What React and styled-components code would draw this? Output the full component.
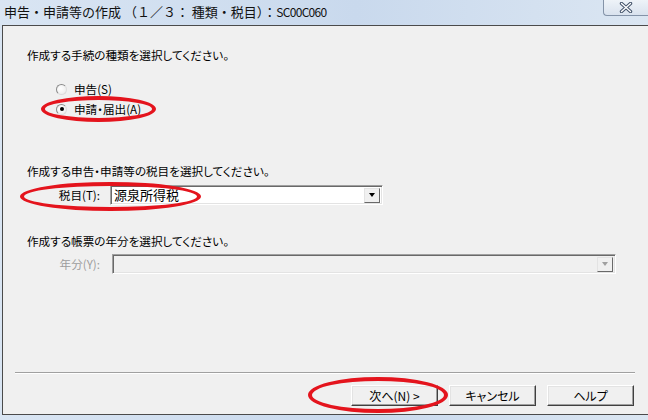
import React from "react";
import styled, { createGlobalStyle } from "styled-components";

const GlobalStyle = createGlobalStyle`
  html, body {
    margin: 0;
    padding: 0;
  }
  body {
    width: 648px;
    height: 420px;
    overflow: hidden;
    font-family: "Noto Sans CJK JP", "Noto Sans", sans-serif;
  }
`;

const Window = styled.div`
  position: relative;
  width: 648px;
  height: 420px;
  display: flex;
  flex-direction: column;
  background: linear-gradient(to right, #d9e5f3, #c9d9ed 55%, #dbe6f2);
  overflow: hidden;
`;

const TitleBar = styled.div`
  height: 25px;
  display: flex;
  align-items: flex-start;
`;

const Title = styled.div`
  font-size: 13px;
  line-height: 16px;
  color: #111;
  padding: 4px 0 0 4px;
  white-space: nowrap;
  span {
    font-size: 12px;
    letter-spacing: -0.7px;
  }
`;

const CloseButton = styled.div`
  margin-left: auto;
  width: 45px;
  height: 16px;
  box-sizing: border-box;
  border: 1px solid #8493a8;
  border-top: none;
  border-right: none;
  border-bottom-left-radius: 4px;
  background: linear-gradient(#eef3f8, #d9e2ee);
  display: flex;
  align-items: center;
  justify-content: center;
`;

const Client = styled.div`
  flex: 1;
  margin: 0 0 5px 2px;
  background: #f0f0f0;
  border: 1px solid #4b4b4b;
  border-right: none;
  display: flex;
  flex-direction: column;
  font-size: 11.6px;
  color: #000;
  font-feature-settings: "palt";
`;

const Prompt = styled.div`
  margin: ${(p) => p.$top}px 0 0 24px;
  line-height: 16px;
  white-space: nowrap;
`;

const RadioGroup = styled.div`
  margin: 16px 0 0 53px;
  display: flex;
  flex-direction: column;
`;

const RadioRow = styled.label`
  height: 20px;
  display: flex;
  align-items: center;
  gap: 7px;
  white-space: nowrap;
`;

const RadioDot = styled.span`
  width: 11px;
  height: 11px;
  box-sizing: border-box;
  border-radius: 50%;
  border: 1px solid;
  border-color: #8a8a8a #dcdcdc #dcdcdc #8a8a8a;
  background: radial-gradient(circle at 40% 40%, #ffffff, #e9e9e9);
  display: flex;
  align-items: center;
  justify-content: center;
  &::after {
    content: "";
    width: 4px;
    height: 4px;
    border-radius: 50%;
    background: ${(p) => (p.$checked ? "#000" : "transparent")};
  }
`;

const FieldRow = styled.div`
  margin-top: ${(p) => p.$top}px;
  display: flex;
  align-items: center;
  height: 20px;
`;

const FieldLabel = styled.div`
  width: 97px;
  text-align: right;
  color: ${(p) => (p.$disabled ? "#9d9d9d" : "#000")};
  white-space: nowrap;
`;

const Combo = styled.div`
  margin-left: ${(p) => p.$gap}px;
  width: ${(p) => p.$width}px;
  height: 20px;
  box-sizing: border-box;
  border: 1px solid;
  border-color: #a0a0a0 #ffffff #ffffff #a0a0a0;
  box-shadow: inset 1px 1px 0 #696969, inset -1px -1px 0 #e3e3e3;
  background: ${(p) => (p.$disabled ? "#f0f0f0" : "#fff")};
  display: flex;
  align-items: center;
  padding: 0 2px 0 3px;
`;

const ComboText = styled.div`
  flex: 1;
  font-size: 13px;
  line-height: 16px;
`;

const DropButton = styled.div`
  width: 16px;
  height: 15px;
  box-sizing: border-box;
  border: 1px solid;
  border-color: #e3e3e3 #696969 #696969 #e3e3e3;
  background: #f0f0f0;
  display: flex;
  align-items: center;
  justify-content: center;
  &::after {
    content: "";
    border-left: 3.5px solid transparent;
    border-right: 3.5px solid transparent;
    border-top: 4px solid ${(p) => (p.$disabled ? "#a0a0a0" : "#000")};
  }
`;

const Spacer = styled.div`
  flex: 1;
`;

const Separator = styled.div`
  margin: 0 13px 0 12px;
  border-top: 1px solid #a0a0a0;
  border-bottom: 1px solid #ffffff;
`;

const ButtonBar = styled.div`
  display: flex;
  justify-content: flex-end;
  gap: 11px;
  padding: 11px 14px 8px 0;
`;

const Button = styled.div`
  width: 87px;
  height: 21px;
  box-sizing: border-box;
  border: 1px solid;
  border-color: #ffffff #404040 #404040 #ffffff;
  box-shadow: inset -1px -1px 0 #a0a0a0, inset 1px 1px 0 #e3e3e3;
  background: #f0f0f0;
  display: flex;
  align-items: center;
  justify-content: center;
  white-space: nowrap;
  font-size: 12px;
`;

const Mark = styled.div`
  position: absolute;
  left: ${(p) => p.$x}px;
  top: ${(p) => p.$y}px;
  width: ${(p) => p.$w}px;
  height: ${(p) => p.$h}px;
  box-sizing: border-box;
  border: 4px solid #e4141d;
  border-radius: 50%;
  pointer-events: none;
`;

const CloseIcon = () => (
  <svg width="14" height="11" viewBox="0 0 14 11">
    <path d="M2.5 1.5 L11.5 9.5 M11.5 1.5 L2.5 9.5" stroke="#43536a" strokeWidth="3.4" strokeLinecap="round" />
    <path d="M2.5 1.5 L11.5 9.5 M11.5 1.5 L2.5 9.5" stroke="#ffffff" strokeWidth="1.4" strokeLinecap="round" />
  </svg>
);

export default function App() {
  return (
    <>
      <GlobalStyle />
      <Window>
        <TitleBar>
          <Title>
            申告・申請等の作成 （１／３： 種類・税目）：<span>SC00C060</span>
          </Title>
          <CloseButton>
            <CloseIcon />
          </CloseButton>
        </TitleBar>
        <Client>
          <Prompt $top={21}>作成する手続の種類を選択してください。</Prompt>
          <RadioGroup>
            <RadioRow>
              <RadioDot />
              申告(S)
            </RadioRow>
            <RadioRow>
              <RadioDot $checked />
              申請・届出(A)
            </RadioRow>
          </RadioGroup>
          <Prompt $top={44}>作成する申告・申請等の税目を選択してください。</Prompt>
          <FieldRow $top={6}>
            <FieldLabel>税目(T):</FieldLabel>
            <Combo $gap={10} $width={273}>
              <ComboText>源泉所得税</ComboText>
              <DropButton />
            </Combo>
          </FieldRow>
          <Prompt $top={28}>作成する帳票の年分を選択してください。</Prompt>
          <FieldRow $top={5}>
            <FieldLabel $disabled>年分(Y):</FieldLabel>
            <Combo $gap={12} $width={504} $disabled>
              <ComboText />
              <DropButton $disabled />
            </Combo>
          </FieldRow>
          <Spacer />
          <Separator />
          <ButtonBar>
            <Button>次へ(N) &gt;</Button>
            <Button>キャンセル</Button>
            <Button>ヘルプ</Button>
          </ButtonBar>
        </Client>
        <Mark $x={41} $y={96} $w={115} $h={26} />
        <Mark $x={20} $y={182} $w={181} $h={29} />
        <Mark $x={308} $y={377} $w={140} $h={36} />
      </Window>
    </>
  );
}
